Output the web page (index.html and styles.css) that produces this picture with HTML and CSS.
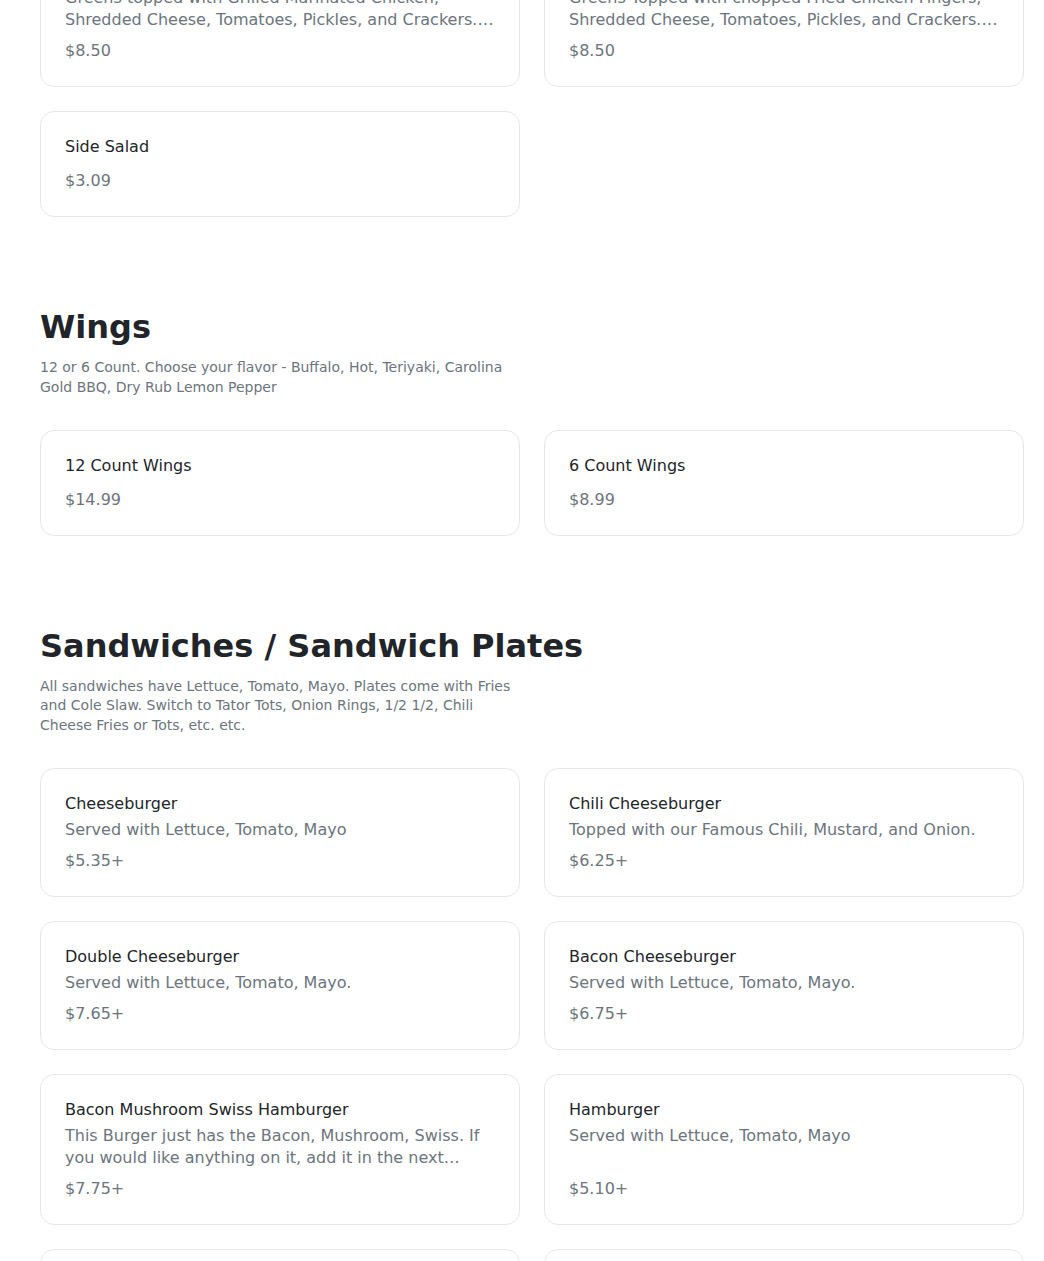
FILE: index.html
```html
<!DOCTYPE html>
<html lang="en">
<head>
<meta charset="utf-8">
<title>Menu</title>
<link rel="stylesheet" href="styles.css">
</head>
<body>
<main class="menu">
  <section class="section section-first">
    <div class="grid">
      <div class="card">
        <div class="info">
          <div class="title">Grilled Chicken Salad</div>
          <div class="desc">Greens topped with Grilled Marinated Chicken, Shredded Cheese, Tomatoes, Pickles, and Crackers. Served with your choice of dressing.</div>
        </div>
        <div class="price">$8.50</div>
      </div>
      <div class="card">
        <div class="info">
          <div class="title">Fried Chicken Salad</div>
          <div class="desc">Greens Topped with chopped Fried Chicken Fingers, Shredded Cheese, Tomatoes, Pickles, and Crackers. Served with your choice of dressing.</div>
        </div>
        <div class="price">$8.50</div>
      </div>
      <div class="card">
        <div class="info">
          <div class="title">Side Salad</div>
        </div>
        <div class="price price-solo">$3.09</div>
      </div>
    </div>
  </section>

  <section class="section">
    <h2 class="heading">Wings</h2>
    <p class="intro">12 or 6 Count. Choose your flavor - Buffalo, Hot, Teriyaki, Carolina Gold BBQ, Dry Rub Lemon Pepper</p>
    <div class="grid">
      <div class="card">
        <div class="info">
          <div class="title">12 Count Wings</div>
        </div>
        <div class="price price-solo">$14.99</div>
      </div>
      <div class="card">
        <div class="info">
          <div class="title">6 Count Wings</div>
        </div>
        <div class="price price-solo">$8.99</div>
      </div>
    </div>
  </section>

  <section class="section">
    <h2 class="heading">Sandwiches / Sandwich Plates</h2>
    <p class="intro">All sandwiches have Lettuce, Tomato, Mayo. Plates come with Fries and Cole Slaw. Switch to Tator Tots, Onion Rings, 1/2 1/2, Chili Cheese Fries or Tots, etc. etc.</p>
    <div class="grid">
      <div class="card">
        <div class="info">
          <div class="title">Cheeseburger</div>
          <div class="desc">Served with Lettuce, Tomato, Mayo</div>
        </div>
        <div class="price">$5.35+</div>
      </div>
      <div class="card">
        <div class="info">
          <div class="title">Chili Cheeseburger</div>
          <div class="desc">Topped with our Famous Chili, Mustard, and Onion.</div>
        </div>
        <div class="price">$6.25+</div>
      </div>
      <div class="card">
        <div class="info">
          <div class="title">Double Cheeseburger</div>
          <div class="desc">Served with Lettuce, Tomato, Mayo.</div>
        </div>
        <div class="price">$7.65+</div>
      </div>
      <div class="card">
        <div class="info">
          <div class="title">Bacon Cheeseburger</div>
          <div class="desc">Served with Lettuce, Tomato, Mayo.</div>
        </div>
        <div class="price">$6.75+</div>
      </div>
      <div class="card">
        <div class="info">
          <div class="title">Bacon Mushroom Swiss Hamburger</div>
          <div class="desc">This Burger just has the Bacon, Mushroom, Swiss. If you would like anything on it, add it in the next screen.</div>
        </div>
        <div class="price">$7.75+</div>
      </div>
      <div class="card">
        <div class="info">
          <div class="title">Hamburger</div>
          <div class="desc">Served with Lettuce, Tomato, Mayo</div>
        </div>
        <div class="price">$5.10+</div>
      </div>
      <div class="card">
        <div class="info">
          <div class="title">Chicken Sandwich</div>
          <div class="desc">Served with Lettuce, Tomato, Mayo</div>
        </div>
        <div class="price">$5.95+</div>
      </div>
      <div class="card">
        <div class="info">
          <div class="title">BLT</div>
          <div class="desc">Bacon, Lettuce, Tomato, Mayo</div>
        </div>
        <div class="price">$4.95+</div>
      </div>
    </div>
  </section>
</main>
</body>
</html>
```

FILE: styles.css
```css
* {
  box-sizing: border-box;
}

html, body {
  margin: 0;
  padding: 0;
  background: #ffffff;
}

body {
  font-family: "DejaVu Sans", "Liberation Sans", sans-serif;
  color: #212529;
}

.menu {
  padding: 0 20px 40px 40px;
}

.section {
  margin-top: 90px;
}

.section-first {
  margin-top: -64px;
}

.heading {
  margin: 0;
  font-size: 32px;
  line-height: 40px;
  font-weight: 700;
  color: #212529;
}

.intro {
  margin: 11px 0 0 0;
  max-width: 480px;
  font-size: 14px;
  line-height: 19.5px;
  color: #6c757d;
}

.grid {
  margin-top: 32.5px;
  display: grid;
  grid-template-columns: 1fr 1fr;
  gap: 24px;
}

.section-first .grid {
  margin-top: 0;
}

.card {
  display: flex;
  flex-direction: column;
  border: 1px solid #e6e7e9;
  border-radius: 14px;
  padding: 25px 24px 23px 24px;
  background: #ffffff;
}

.info {
  flex: 1 1 auto;
}

.title {
  font-size: 16px;
  line-height: 20px;
  color: #212529;
}

.desc {
  margin-top: 5px;
  font-size: 16px;
  line-height: 22px;
  color: #6c757d;
  display: -webkit-box;
  -webkit-line-clamp: 2;
  -webkit-box-orient: vertical;
  overflow: hidden;
}

.price {
  margin-top: 8px;
  font-size: 16px;
  line-height: 24px;
  color: #6c757d;
}

.price-solo {
  margin-top: 12px;
}
```
